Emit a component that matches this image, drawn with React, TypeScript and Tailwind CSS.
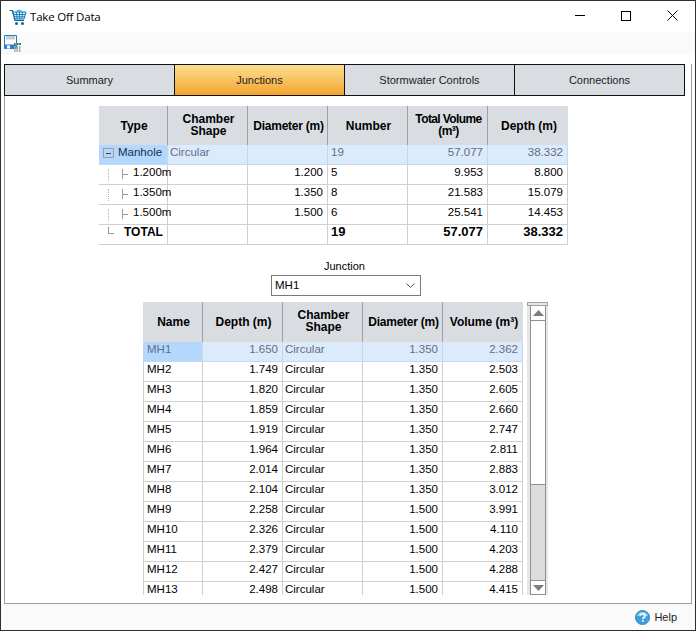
const font = "font-['Liberation_Sans',Arial,sans-serif]";

const tabs = ["Summary", "Junctions", "Stormwater Controls", "Connections"];

const junctions = [
  ["MH1", "1.650", "1.350", "2.362"],
  ["MH2", "1.749", "1.350", "2.503"],
  ["MH3", "1.820", "1.350", "2.605"],
  ["MH4", "1.859", "1.350", "2.660"],
  ["MH5", "1.919", "1.350", "2.747"],
  ["MH6", "1.964", "1.350", "2.811"],
  ["MH7", "2.014", "1.350", "2.883"],
  ["MH8", "2.104", "1.350", "3.012"],
  ["MH9", "2.258", "1.500", "3.991"],
  ["MH10", "2.326", "1.500", "4.110"],
  ["MH11", "2.379", "1.500", "4.203"],
  ["MH12", "2.427", "1.500", "4.288"],
  ["MH13", "2.498", "1.500", "4.415"],
];

const subRows = [
  ["1.200m", "1.200", "5", "9.953", "8.800"],
  ["1.350m", "1.350", "8", "21.583", "15.079"],
  ["1.500m", "1.500", "6", "25.541", "14.453"],
];

function BasketIcon() {
  return (
    <svg width="18" height="18" viewBox="0 0 18 18" fill="none">
      <path d="M7 3.500C8 1.500 12 1 14 3.500z" fill="#4fb4e6" />
      <path d="M.5 2.500h2.800l2.700 10h9" stroke="#14608f" strokeWidth="1.200" />
      <path d="M4 4h13l-2 7H6z" fill="#dff2fb" stroke="#0f78b8" />
      <path d="M7.500 4l.7 7M10.500 4v7M13.500 4l-.7 7M5 6.500h11.500M5.500 8.800h10.500" stroke="#0f78b8" strokeWidth=".9" />
      <circle cx="7.500" cy="15.500" r="1.500" fill="#0f5f92" />
      <circle cx="13.500" cy="15.500" r="1.500" fill="#0f5f92" />
    </svg>
  );
}

function SaveIcon() {
  return (
    <svg width="18" height="18" viewBox="0 0 18 18" fill="none">
      <path d="M.5.500h12v13h-12z" fill="#fff" stroke="#1f7fd0" />
      <path d="M2 1h9v3.500H2z" fill="#c9ccd0" />
      <path d="M1 9.500h11v4H1z" fill="#2a7fd0" />
      <path d="M3 10.500h3v3H3z" fill="#fff" />
      <path d="M10 8h7v2h-7z" fill="#3e7d3a" />
      <path d="M11 8.500h1.500v1H11zM14 8.500h1.500v1H14z" fill="#d5e8d0" />
      <path d="M10 11h1.500v6H10zM12.500 11H14v6h-1.500zM15 11h1.500v6H15z" fill="#a9adb0" />
    </svg>
  );
}

function HelpIcon() {
  return (
    <svg width="15" height="15" viewBox="0 0 16 16">
      <circle cx="8" cy="8" r="7.500" fill="#3f9fdc" stroke="#2f83bd" />
      <path d="M2 7a6 5 0 0 1 12 0c-3-1.500-9-1.500-12 0z" fill="#8ccbf0" />
      <path d="M5.500 6.200c.2-3 5.200-3 5.200 0 0 1.800-2.300 1.800-2.300 3.300" fill="none" stroke="#fff" strokeWidth="1.700" />
      <rect x="7.500" y="10.700" width="1.800" height="1.800" fill="#fff" />
    </svg>
  );
}

function Chevron({ down }: { down?: boolean }) {
  return (
    <svg width="11" height="6" viewBox="0 0 11 6">
      <path d={down ? "M0 0h11L5.500 6z" : "M0 6h11L5.500 0z"} fill="#7d7d7d" />
    </svg>
  );
}

function HeaderCell({ w, className, children }: { w: string; className?: string; children: React.ReactNode }) {
  return (
    <div className={`${w} flex shrink-0 items-center justify-center border-r border-[#a0a0a0] pb-[1px] pl-[2px] text-center text-xs leading-[12px] font-bold text-black last:border-r-0`}>
      <span className={className}>{children}</span>
    </div>
  );
}

function Cell({ w, right, bold, muted, selected, tight, children }: {
  w: string;
  right?: boolean;
  bold?: boolean;
  muted?: boolean;
  selected?: boolean;
  tight?: boolean;
  children?: React.ReactNode;
}) {
  return (
    <div
      className={`${w} shrink-0 overflow-hidden border-r border-b whitespace-nowrap leading-[14px] ${
        selected ? "border-[#c4d8ee]" : "border-[#d0d0d0]"
      } ${right ? "pr-[4px] text-right" : tight ? "pl-[2px] text-left" : "pl-[3px] text-left"} ${bold ? "text-[13px] font-bold" : "text-[11.5px]"} ${muted ? "text-[#5f6f84]" : "text-black"}`}
    >
      {children}
    </div>
  );
}

function TreeLines() {
  return (
    <span className="relative block h-[19px] w-full">
      <span className="absolute top-[4px] left-[9px] h-[12px] border-l border-dotted border-[#b5b5b5]" />
      <span className="absolute top-[4px] left-[23px] h-[10px] border-l border-[#9a9a9a]" />
      <span className="absolute top-[9px] left-[23px] w-[6px] border-t border-[#9a9a9a]" />
    </span>
  );
}

export default function App() {
  return (
    <div className={`${font} flex h-[631px] w-[696px] flex-col overflow-hidden border border-[#2e2e2e] bg-white`}>
      <div className="flex h-[31px] shrink-0 items-center bg-white">
        <div className="ml-[8px]"><BasketIcon /></div>
        <span className="ml-[3px] font-['Open_Sans',sans-serif] text-[11.5px] tracking-[-0.2px] text-black">Take Off Data</span>
        <div className="-mt-[2px] ml-auto flex items-center">
          <div className="mr-[36px] h-px w-[10px] bg-black" />
          <div className="mr-[36px] h-[10px] w-[10px] border border-black" />
          <svg className="mr-[17px]" width="11" height="11" viewBox="0 0 11 11">
            <path d="M.5.500l10 10M10.500.500l-10 10" stroke="#000" />
          </svg>
        </div>
      </div>

      <div className="flex h-[23px] shrink-0 items-center bg-[#fafafa] pl-[3px]">
        <SaveIcon />
      </div>

      <div className="h-[9px] shrink-0 bg-white" />

      <div className="mx-[3px] flex min-h-0 flex-1 flex-col border-x border-b border-[#9aa0a6]">
        <div className="-ml-px flex h-[32px] shrink-0">
          {tabs.map((t, i) => (
            <div
              key={t}
              className={`flex h-full w-[170px] items-center justify-center border-y border-l border-[#111] text-[11px] text-[#1c1c1c] last:w-[171px] last:border-r ${
                i === 1 ? "bg-gradient-to-b from-[#fbdf8d] to-[#f3a427]" : "bg-[#d9dde1]"
              }`}
            >
              {t}
            </div>
          ))}
        </div>

        <div className="flex min-h-0 flex-1 flex-col items-start pt-[10px]">
          <div className="ml-[94px] flex w-[469px] flex-col">
            <div className="flex h-[39px] bg-[#d9dde1]">
              <HeaderCell w="w-[69px]" className="mt-[2px]">Type</HeaderCell>
              <HeaderCell w="w-[80px]">Chamber<br />Shape</HeaderCell>
              <HeaderCell w="w-[80px]" className="mt-[2px] tracking-[-0.25px]">Diameter (m)</HeaderCell>
              <HeaderCell w="w-[80px]" className="mt-[2px]">Number</HeaderCell>
              <HeaderCell w="w-[80px]" className="tracking-[-0.6px]">Total Volume<br />(m³)</HeaderCell>
              <HeaderCell w="w-[80px]" className="mt-[2px]">Depth (m)</HeaderCell>
            </div>
            <div className="flex h-[20px] bg-[#dcebfc]">
              <div className="flex w-[69px] shrink-0 items-center border-r border-b border-[#c4d8ee] bg-[#b3d7fd] pb-[3px] text-[11.5px] text-[#1c2f4a]">
                <span className="mx-[4px] flex h-[10px] w-[11px] shrink-0 items-center justify-center border border-[#9c9c9c]">
                  <span className="h-px w-[5px] bg-[#444]" />
                </span>
                Manhole
              </div>
              <Cell w="w-[80px]" muted selected tight>Circular</Cell>
              <Cell w="w-[80px]" selected />
              <Cell w="w-[80px]" muted selected>19</Cell>
              <Cell w="w-[80px]" right muted selected>57.077</Cell>
              <Cell w="w-[80px]" right muted selected>38.332</Cell>
            </div>
            {subRows.map((r) => (
              <div key={r[0]} className="flex h-[20px]">
                <div className="relative w-[69px] shrink-0 border-r border-b border-[#d0d0d0]">
                  <TreeLines />
                  <span className="absolute top-0 left-[34px] text-[11.5px] leading-[14px] text-black">{r[0]}</span>
                </div>
                <Cell w="w-[80px]" />
                <Cell w="w-[80px]" right>{r[1]}</Cell>
                <Cell w="w-[80px]">{r[2]}</Cell>
                <Cell w="w-[80px]" right>{r[3]}</Cell>
                <Cell w="w-[80px]" right>{r[4]}</Cell>
              </div>
            ))}
            <div className="flex h-[20px]">
              <div className="relative w-[69px] shrink-0 border-r border-b border-[#d0d0d0]">
                <span className="absolute top-[2px] left-[9px] h-[6px] border-l border-[#9a9a9a]" />
                <span className="absolute top-[8px] left-[9px] w-[6px] border-t border-[#9a9a9a]" />
                <span className="absolute top-0 left-[25px] text-xs leading-[14px] font-bold text-black">TOTAL</span>
              </div>
              <Cell w="w-[80px]" />
              <Cell w="w-[80px]" />
              <Cell w="w-[80px]" bold>19</Cell>
              <Cell w="w-[80px]" right bold>57.077</Cell>
              <Cell w="w-[80px]" right bold>38.332</Cell>
            </div>
          </div>

          <div className="mt-[15px] ml-[319px] text-center text-[11px] leading-[13px] text-black">Junction</div>
          <div className="mt-[2px] ml-[266px] flex h-[21px] w-[150px] items-center justify-between border border-[#7a7a7a] pr-[4px] pl-[3px] text-[11.5px]">
            MH1
            <svg width="9" height="5" viewBox="0 0 9 5" fill="none" className="mr-[1px]">
              <path d="M.5.500l4 4 4-4" stroke="#555" />
            </svg>
          </div>

          <div className="mt-[6px] ml-[138px] flex h-[293px] w-[405px] gap-[4px] overflow-hidden">
            <div className="w-[380px] shrink-0">
              <div className="flex h-[40px] bg-[#d9dde1]">
                <HeaderCell w="w-[60px]">Name</HeaderCell>
                <HeaderCell w="w-[80px]">Depth (m)</HeaderCell>
                <HeaderCell w="w-[80px]" className="-mt-[2px]">Chamber<br />Shape</HeaderCell>
                <HeaderCell w="w-[80px]" className="tracking-[-0.25px]">Diameter (m)</HeaderCell>
                <HeaderCell w="w-[80px]">Volume (m³)</HeaderCell>
              </div>
              {junctions.map((j, i) => (
                <div key={j[0]} className={`flex h-[20px] ${i === 0 ? "bg-[#dcebfc]" : ""}`}>
                  <div className={`w-[60px] shrink-0 border-r border-b text-[11.5px] leading-[14px] ${
                    i === 0 ? "border-[#c4d8ee] bg-[#b3d7fd] pl-[4px] text-[#5f6f84]" : "border-l border-[#d0d0d0] pl-[3px] text-black"
                  }`}>{j[0]}</div>
                  <Cell w="w-[80px]" right muted={i === 0} selected={i === 0}>{j[1]}</Cell>
                  <Cell w="w-[80px]" muted={i === 0} selected={i === 0} tight>Circular</Cell>
                  <Cell w="w-[80px]" right muted={i === 0} selected={i === 0}>{j[2]}</Cell>
                  <Cell w="w-[80px]" right muted={i === 0} selected={i === 0}>{j[3]}</Cell>
                </div>
              ))}
            </div>

            <div className="flex h-[293px] w-[21px] shrink-0 flex-col bg-[#e6e6e6]">
              <div className="h-[4px] shrink-0 border border-[#a0a0a0] bg-[#e6e6e6]" />
              <div className="mr-[2px] ml-[3px] flex min-h-0 flex-1 flex-col border-x border-[#909090] bg-[#dcdcdc]">
                <div className="flex h-[15px] shrink-0 items-center justify-center border-b border-[#909090] bg-white"><Chevron /></div>
                <div className="h-[164px] shrink-0 border-b border-[#909090] bg-white" />
                <div className="flex-1" />
                <div className="flex h-[15px] shrink-0 items-center justify-center border-y border-[#909090] bg-white"><Chevron down /></div>
              </div>
            </div>
          </div>
        </div>
      </div>

      <div className="flex h-[26px] shrink-0 items-center justify-end bg-[#fafafa] pr-[18px]">
        <HelpIcon />
        <span className="ml-[4px] text-[11px] text-[#1c1c1c]">Help</span>
      </div>
    </div>
  );
}
